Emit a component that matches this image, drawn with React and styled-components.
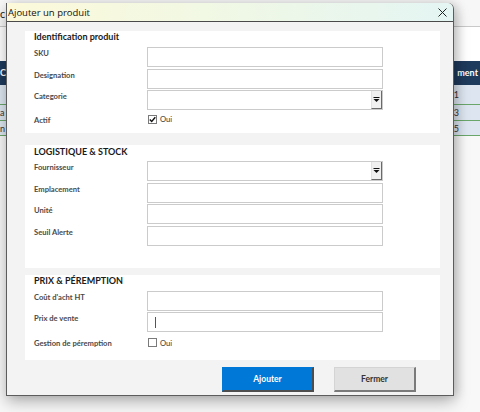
import React from "react";
import styled, { createGlobalStyle } from "styled-components";

const GlobalStyle = createGlobalStyle`
  html, body { margin: 0; padding: 0; background: #ffffff; }
  body { font-family: Lato, "Liberation Sans", sans-serif; }
`;

const Page = styled.div`
  position: relative;
  width: 480px;
  height: 412px;
  overflow: hidden;
  background: #fafafa;
`;

/* spreadsheet behind the dialog */
const Sheet = styled.div`
  display: flex;
  flex-direction: column;
  width: 480px;
`;

const SheetTop = styled.div`
  height: 27px;
  border-bottom: 1px solid #c9c9c9;
  display: flex;
  align-items: flex-end;
  padding-bottom: 6px;
  box-sizing: border-box;
  font-size: 11px;
  color: #222;
  background: #f7f7f7;
`;

const SheetGap = styled.div`
  height: 34px;
  background: #ffffff;
`;

const SheetRow = styled.div`
  display: flex;
  justify-content: space-between;
  align-items: center;
  height: ${(p) => p.$h}px;
  font-size: 9px;
  font-weight: ${(p) => (p.$head ? 700 : 400)};
  color: ${(p) => (p.$head ? "#ffffff" : "#333")};
  background: ${(p) => (p.$head ? "#1e3a5c" : "#dde6f0")};
  border-bottom: 1px solid ${(p) => (p.$head ? "#1e3a5c" : "#6aa66a")};
`;

const SheetCell = styled.span`
  margin-right: ${(p) => p.$mr || 0}px;
`;

const SheetRest = styled.div`
  height: 280px;
  background: #f8f8f8;
`;

/* dialog */
const Dialog = styled.div`
  position: absolute;
  left: 6px;
  top: 3px;
  width: 448px;
  display: flex;
  flex-direction: column;
  border: 1px solid #5c5c5c;
  border-top: none;
  border-top-right-radius: 6px;
  background: #f3f3f3;
  box-shadow: 0 6px 16px rgba(0, 0, 0, 0.28), 4px 0 10px rgba(0, 0, 0, 0.12);
  box-sizing: border-box;
`;

const TitleBar = styled.div`
  height: 18px;
  display: flex;
  align-items: center;
  justify-content: space-between;
  padding: 0 6px 0 1px;
  background: linear-gradient(90deg, #fcf9da 0%, #f1f8e4 45%, #e4f5f3 100%);
  border-bottom: 1px solid #4a4a4a;
  border-top-right-radius: 6px;
  font-family: "Open Sans", "Noto Sans", sans-serif;
  font-size: 9.5px;
  color: #111;
`;

const Body = styled.div`
  display: flex;
  flex-direction: column;
  padding: 9px 13px 3px 18px;
`;

const Section = styled.div`
  display: flex;
  flex-direction: column;
  margin-top: ${(p) => p.$mt || 0}px;
  padding: ${(p) => p.$pt || 0}px 0 ${(p) => p.$pb}px 9px;
  background: #ffffff;
`;

const SectionTitle = styled.div`
  height: 12px;
  line-height: 12px;
  font-size: 9px;
  font-weight: 700;
  color: #1a1a1a;
  margin-bottom: ${(p) => p.$mb}px;
`;

const Rows = styled.div`
  display: grid;
  grid-template-columns: 113px 236px;
  row-gap: 1.5px;
`;

const Label = styled.div`
  padding-top: 1px;
  line-height: 10px;
  font-size: 7.6px;
  font-weight: 700;
  color: #4a4a4a;
`;

const Field = styled.div`
  height: 20px;
  box-sizing: border-box;
  border: 1px solid #cbcbcb;
  background: #ffffff;
  display: flex;
  align-items: center;
  justify-content: flex-end;
`;

const Caret = styled.span`
  margin-right: auto;
  margin-left: 7px;
  width: 1px;
  height: 11px;
  background: #555;
`;

const DropButton = styled.div`
  width: 11px;
  height: 18px;
  box-sizing: border-box;
  background: #f0f0f0;
  border-left: 1px solid #e2e2e2;
  border-right: 1px solid #6a6a6a;
  border-bottom: 1px solid #6a6a6a;
  display: flex;
  align-items: center;
  justify-content: center;
`;

const CheckRow = styled.div`
  grid-column: 1 / -1;
  display: grid;
  grid-template-columns: 113px 1fr;
  margin-top: ${(p) => p.$mt}px;
  height: 12px;
  align-items: center;
`;

const CheckWrap = styled.div`
  display: flex;
  align-items: center;
  gap: 3px;
  padding-left: 1px;
  font-size: 7.6px;
  color: #333;
`;

const Box = styled.span`
  width: 9px;
  height: 9px;
  box-sizing: border-box;
  border: 1px solid #7a7a7a;
  background: #fff;
  display: flex;
  align-items: center;
  justify-content: center;
`;

const Buttons = styled.div`
  display: flex;
  gap: 20px;
  margin-top: 7px;
  padding-left: 197px;
`;

const Button = styled.div`
  width: ${(p) => p.$w}px;
  height: 25px;
  box-sizing: border-box;
  display: flex;
  align-items: center;
  justify-content: center;
  font-size: 8.5px;
  font-weight: 700;
  color: ${(p) => (p.$primary ? "#ffffff" : "#333")};
  background: ${(p) => (p.$primary ? "#0078d7" : "#e1e1e1")};
  border-top: 1px solid ${(p) => (p.$primary ? "#0078d7" : "#d4d4d4")};
  border-left: 1px solid ${(p) => (p.$primary ? "#0078d7" : "#d4d4d4")};
  border-right: 2px solid ${(p) => (p.$primary ? "#4d4d4d" : "#7a7a7a")};
  border-bottom: 2px solid ${(p) => (p.$primary ? "#4d4d4d" : "#7a7a7a")};
`;

function CloseIcon() {
  return (
    <svg width="9" height="9" viewBox="0 0 9 9">
      <path d="M0.5 0.5L8.5 8.5M8.5 0.5L0.5 8.5" stroke="#222" strokeWidth="1" />
    </svg>
  );
}

function Arrow() {
  return (
    <svg width="7" height="5" viewBox="0 0 7 5">
      <rect x="0.5" y="0" width="6" height="1" fill="#111" />
      <path d="M0.5 2H6.5L3.5 5Z" fill="#111" />
    </svg>
  );
}

function Check({ checked, label }) {
  return (
    <CheckWrap>
      <Box>
        {checked && (
          <svg width="7" height="7" viewBox="0 0 7 7">
            <path d="M0.8 3.4L2.7 5.4L6.3 1.2" stroke="#111" strokeWidth="1.4" fill="none" />
          </svg>
        )}
      </Box>
      {label}
    </CheckWrap>
  );
}

function Input({ combo, caret }) {
  return (
    <Field>
      {caret && <Caret />}
      {combo && (
        <DropButton>
          <Arrow />
        </DropButton>
      )}
    </Field>
  );
}

export default function App() {
  return (
    <Page>
      <GlobalStyle />
      <Sheet>
        <SheetTop>
          <span>c</span>
        </SheetTop>
        <SheetGap />
        <SheetRow $head $h={23}>
          <SheetCell>Ca</SheetCell>
          <SheetCell $mr={2}>ment</SheetCell>
        </SheetRow>
        <SheetRow $h={19}>
          <SheetCell></SheetCell>
          <SheetCell $mr={21}>1</SheetCell>
        </SheetRow>
        <SheetRow $h={15}>
          <SheetCell>a</SheetCell>
          <SheetCell $mr={21}>3</SheetCell>
        </SheetRow>
        <SheetRow $h={14}>
          <SheetCell>n</SheetCell>
          <SheetCell $mr={21}>5</SheetCell>
        </SheetRow>
        <SheetRest />
      </Sheet>

      <Dialog>
        <TitleBar>
          <span>Ajouter un produit</span>
          <CloseIcon />
        </TitleBar>
        <Body>
          <Section $pb={8}>
            <SectionTitle $mb={4}>Identification produit</SectionTitle>
            <Rows>
              <Label>SKU</Label>
              <Input />
              <Label>Designation</Label>
              <Input />
              <Label>Categorie</Label>
              <Input combo />
              <CheckRow $mt={1.5}>
                <Label>Actif</Label>
                <Check checked label="Oui" />
              </CheckRow>
            </Rows>
          </Section>

          <Section $mt={12} $pt={1} $pb={22}>
            <SectionTitle $mb={3}>LOGISTIQUE &amp; STOCK</SectionTitle>
            <Rows>
              <Label>Fournisseur</Label>
              <Input combo />
              <Label>Emplacement</Label>
              <Input />
              <Label>Unité</Label>
              <Input />
              <Label>Seuil Alerte</Label>
              <Input />
            </Rows>
          </Section>

          <Section $mt={7} $pb={11}>
            <SectionTitle $mb={4}>PRIX &amp; PÉREMPTION</SectionTitle>
            <Rows>
              <Label>Coût d'acht HT</Label>
              <Input />
              <Label>Prix de vente</Label>
              <Input caret />
              <CheckRow $mt={3}>
                <Label>Gestion de péremption</Label>
                <Check label="Oui" />
              </CheckRow>
            </Rows>
          </Section>

          <Buttons>
            <Button $primary $w={92}>Ajouter</Button>
            <Button $w={82}>Fermer</Button>
          </Buttons>
        </Body>
      </Dialog>
    </Page>
  );
}
